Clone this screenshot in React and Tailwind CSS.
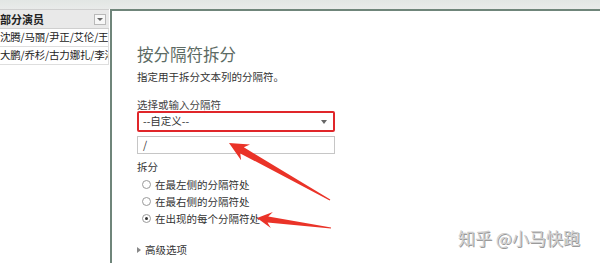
import React from 'react';

const font = { fontFamily: '"Noto Sans CJK SC", "Noto Sans", sans-serif' };

// tapered arrow polygon from tail to tip
const arrowPoints = (tx, ty, hx, hy, headLen = 16, headW = 7, neckW = 3, tailW = 0.6) => {
  const dx = hx - tx;
  const dy = hy - ty;
  const len = Math.hypot(dx, dy);
  const ux = dx / len;
  const uy = dy / len;
  const nx = -uy;
  const ny = ux;
  const bx = hx - ux * headLen;
  const by = hy - uy * headLen;
  const p = (x, y) => `${x.toFixed(1)},${y.toFixed(1)}`;
  return [
    p(tx + nx * tailW, ty + ny * tailW),
    p(bx + ux * 4 + nx * neckW, by + uy * 4 + ny * neckW),
    p(bx + nx * headW, by + ny * headW),
    p(hx, hy),
    p(bx - nx * headW, by - ny * headW),
    p(bx + ux * 4 - nx * neckW, by + uy * 4 - ny * neckW),
    p(tx - nx * tailW, ty - ny * tailW),
  ].join(' ');
};

const Radio = ({ checked, label }) => (
  <div className="flex items-center h-[17px]">
    <span className="w-[9px] h-[9px] rounded-full border border-[#9a9a9a] bg-white flex items-center justify-center mr-[4px]">
      {checked && <span className="w-[3px] h-[3px] rounded-full bg-[#333]" />}
    </span>
    <span className="text-[10.5px] text-[#333] leading-[17px]">{label}</span>
  </div>
);

export default function App() {
  return (
    <div className="relative w-[600px] h-[263px] bg-white overflow-hidden flex flex-col" style={font}>
      {/* top strip */}
      <div className="h-[9px] bg-gradient-to-b from-[#e2e6e4] to-[#e9ebea] shrink-0" />

      <div className="flex flex-1">
        {/* sheet column */}
        <div className="w-[109px] shrink-0 flex flex-col">
          <div className="h-[20px] bg-[#e9e9e9] border-y border-[#cfcfcf] flex items-center justify-between pr-[3px]">
            <span className="text-[11px] font-bold text-[#222] leading-none">部分演员</span>
            <span className="w-[12px] h-[11px] border border-[#b9b9b9] bg-[#f7f7f7] flex items-center justify-center">
              <span className="w-0 h-0 border-x-[3px] border-x-transparent border-t-[3px] border-t-[#666]" />
            </span>
          </div>
          <div className="h-[18px] border-b border-r border-[#dedede] flex items-center overflow-hidden">
            <span className="text-[10.5px] text-[#222] whitespace-nowrap leading-none tracking-[-0.2px]">沈腾/马丽/尹正/艾伦/王</span>
          </div>
          <div className="h-[18px] border-b border-r border-[#dedede] flex items-center overflow-hidden">
            <span className="text-[10.5px] text-[#222] whitespace-nowrap leading-none tracking-[-0.2px]">大鹏/乔杉/古力娜扎/李沁</span>
          </div>
        </div>

        {/* split pane */}
        <div className="flex-1 ml-[1px] border-l-2 border-t-2 border-[#6f857a] bg-white pl-[25px] pt-[33px]">
          <div className="h-[20px] text-[16.5px] text-[#5d6b64] leading-[20px]">按分隔符拆分</div>
          <div className="h-[14px] mt-[6px] text-[10.5px] text-[#333] leading-[14px]">指定用于拆分文本列的分隔符。</div>
          <div className="h-[12px] mt-[15px] text-[10.5px] text-[#444] leading-[12px]">选择或输入分隔符</div>
          <div className="w-[198px] h-[21px] border-2 border-[#e0262a] rounded-[2px] flex items-center justify-between px-[4px]">
            <span className="text-[10.5px] text-[#333] leading-none">--自定义--</span>
            <span className="w-0 h-0 border-x-[3px] border-x-transparent border-t-[4px] border-t-[#666] mr-[2px]" />
          </div>
          <div className="w-[198px] h-[18px] mt-[4px] border border-[#c6c6c6] flex items-center px-[5px]">
            <span className="text-[10.5px] text-[#333] leading-none">/</span>
          </div>
          <div className="h-[14px] mt-[6px] text-[10.5px] text-[#333] leading-[14px]">拆分</div>
          <div className="pl-[5px] mt-[2px]">
            <Radio label="在最左侧的分隔符处" />
            <Radio label="在最右侧的分隔符处" />
            <Radio checked label="在出现的每个分隔符处" />
          </div>
          <div className="flex items-center h-[14px] mt-[16px]">
            <span className="w-0 h-0 border-y-[3.5px] border-y-transparent border-l-[4px] border-l-[#888] mr-[4px]" />
            <span className="text-[10.5px] text-[#333] leading-[14px]">高级选项</span>
          </div>
        </div>
      </div>

      {/* watermark */}
      <div className="absolute left-[458px] top-[229px] text-[17px] leading-none text-[#cfcfcf] [text-shadow:1px_1px_0_#9a9a9a,-1px_-1px_0_#ffffff]">
        知乎 @小马快跑
      </div>

      {/* annotation arrows */}
      <svg className="absolute left-0 top-0 pointer-events-none" width="600" height="263">
        <polygon points={arrowPoints(330, 200, 229, 143, 19, 9, 3.5, 0.6)} fill="#ea3328" />
        <polygon points={arrowPoints(331, 228, 257, 218, 15, 8, 3, 0.6)} fill="#ea3328" />
      </svg>
    </div>
  );
}
